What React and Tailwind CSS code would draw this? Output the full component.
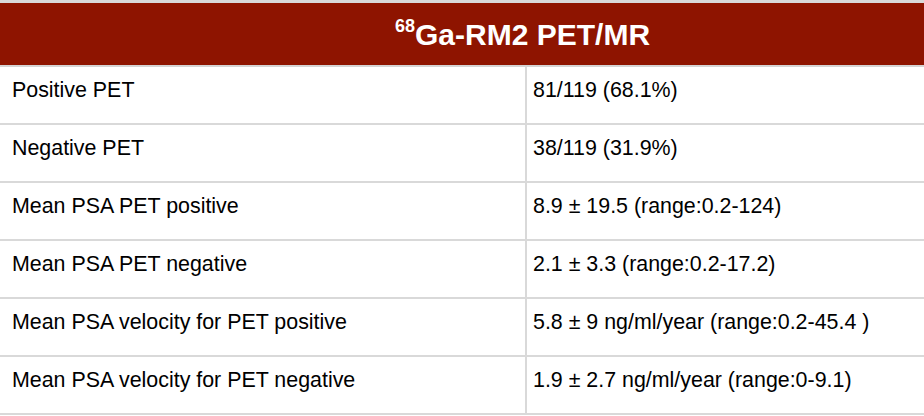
import React from "react";

const rows = [
  ["Positive PET", "81/119 (68.1%)"],
  ["Negative PET", "38/119 (31.9%)"],
  ["Mean PSA PET positive", "8.9 ± 19.5 (range:0.2-124)"],
  ["Mean PSA PET negative", "2.1 ± 3.3 (range:0.2-17.2)"],
  ["Mean PSA velocity for PET positive", "5.8 ± 9 ng/ml/year (range:0.2-45.4 )"],
  ["Mean PSA velocity for PET negative", "1.9 ± 2.7 ng/ml/year (range:0-9.1)"],
];

export default function App() {
  return (
    <div className="h-[416px] w-[924px] overflow-hidden bg-white font-['Liberation_Sans',Arial,sans-serif] text-black">
      <div className="border-t-[3px] border-[#d9d9d9]">
        <div className="h-[64px] border-b-2 border-[#d4d4d4] bg-[#8e1400] pl-[395px] pt-[14px]">
          <h1 className="text-[30px] font-bold leading-9 text-white">
            <span className="relative -top-[13px] inline-block text-[18px] leading-none">68</span>
            Ga-RM2 PET/MR
          </h1>
        </div>
      </div>

      <div className="grid grid-cols-[527px_1fr]">
        {rows.map(([label, value]) => (
          <React.Fragment key={label}>
            <div className="h-[58px] border-b-2 border-r-2 border-[#d9d9d9] pl-3 pt-[11px] text-[21.4px] leading-6">
              {label}
            </div>
            <div className="h-[58px] border-b-2 border-[#d9d9d9] pl-[6px] pt-[11px] text-[21.4px] leading-6">
              {value}
            </div>
          </React.Fragment>
        ))}
      </div>
    </div>
  );
}
